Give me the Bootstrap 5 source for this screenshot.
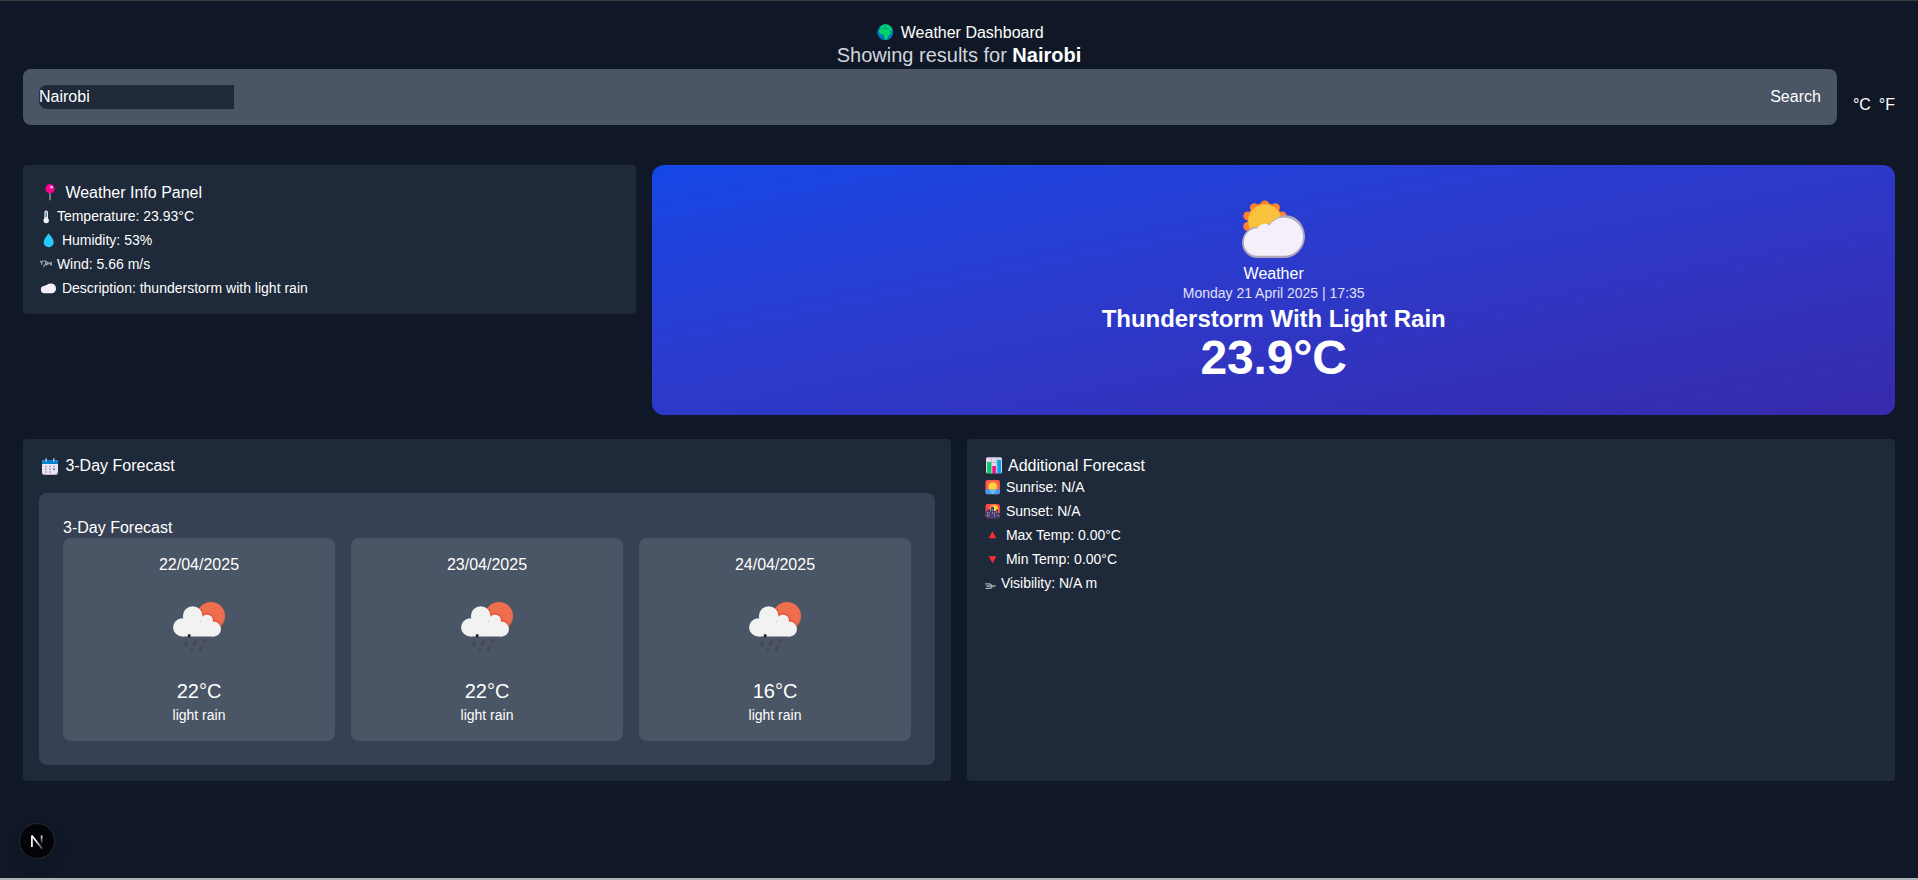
<!DOCTYPE html>
<html lang="en">
<head>
<meta charset="utf-8">
<meta name="viewport" content="width=device-width, initial-scale=1">
<title>Weather Dashboard</title>
<link href="https://cdn.jsdelivr.net/npm/bootstrap@5.3.0/dist/css/bootstrap.min.css" rel="stylesheet">
<style>
  body { font-family: "Liberation Sans", Arial, sans-serif; font-size: 16px; line-height: 24px; color: #fff; background: #101827; height: 880px; overflow: hidden; border-top: 1px solid #3c3c3c; border-bottom: 2px solid #a9b4b9; }
  h1, h2, h3, p { margin: 0; font-size: inherit; font-weight: 400; line-height: inherit; }
  svg { display: block; flex: none; overflow: visible; }
  .page { padding: 20px 23px 0; }
  .title { line-height: 23px; gap: 4.45px; }
  .results { font-size: 20px; line-height: 23px; color: #d1d5dc; padding-bottom: 2px; }
  .search { background: #4a5565; border-radius: 8px; padding: 16px; height: 56px; }
  .search input { width: 195px; height: 24px; padding: 0; border: 0; border-radius: 8px 0 0 8px; background: #1e2939; color: #fff; outline: 0; font: inherit; line-height: 24px; }
  .search button { padding: 0; border: 0; background: none; color: #fff; line-height: 24px; }
  .main-grid { display: grid; grid-template-columns: repeat(3, 1fr); gap: 16px; margin-top: 40px; }
  .wide { grid-column: span 2; }
  .half-grid { display: grid; grid-template-columns: 1fr 1fr; gap: 16px; margin-top: 24px; height: 342px; }
  .panel { background: #1e2939; border-radius: 4px; padding: 16px; }
  .info { height: 149px; }
  .head { gap: 4.4px; height: 21px; line-height: 21px; }
  .info .head { height: 23.5px; line-height: 24px; }
  .line { font-size: 14px; height: 24px; line-height: 22px; gap: 3.9px; }
  .hero { height: 250px; border-radius: 12px; padding-top: 35px; background: linear-gradient(to bottom right, #1447e6, #372aac); background: linear-gradient(to bottom right in oklab, #1447e6, #372aac); }
  .hero-name { margin-top: 4px; line-height: 24px; height: 21.5px; }
  .hero-date { font-size: 14px; line-height: 18px; height: 21.5px; color: #e0e2f6; }
  .hero-desc { font-size: 24px; line-height: 28px; height: 29px; font-weight: 700; letter-spacing: -.04px; }
  .hero-temp { font-size: 48px; line-height: 48px; font-weight: 700; letter-spacing: -.15px; }
  .inner { background: #364153; border-radius: 8px; padding: 24px; margin-top: 17px; height: 272px; }
  .inner h3 { line-height: 21px; }
  .days { display: grid; grid-template-columns: repeat(3, 1fr); gap: 16px; }
  .day { background: #4a5565; border-radius: 8px; height: 203px; padding-top: 16px; }
  .day-date { line-height: 22px; margin-bottom: 22px; }
  .day-temp { font-size: 20px; line-height: 28px; margin-top: 15px; }
  .day-desc { font-size: 14px; line-height: 20px; }
  .next { left: 19px; bottom: 21px; width: 36px; height: 36px; border-radius: 50%; background: #030408; border: 1px solid #2a2a2a; box-shadow: 0 8px 16px rgba(0,0,0,.08); }
</style>
</head>
<body>
<svg width="0" height="0" class="position-absolute">
  <symbol id="rain" viewBox="0 0 64 64">
    <circle cx="44" cy="18" r="14" fill="#ec6e4c"/>
    <clipPath id="sunclip"><circle cx="44" cy="18" r="14"/></clipPath>
    <g clip-path="url(#sunclip)" fill="#e9472f"><circle cx="25.7" cy="18" r="10.7"/><circle cx="40" cy="22.3" r="7"/><circle cx="46.7" cy="31" r="8.5"/></g>
    <g fill="#f2f2f2"><circle cx="25.7" cy="18" r="9.8"/><circle cx="15.2" cy="29.4" r="9.1"/><circle cx="40" cy="22.5" r="6"/><circle cx="46.6" cy="31" r="7.4"/><path d="M15 24h27l5 6v8.4H15z"/></g>
    <path d="M22 38l.3-.6" stroke="#222" stroke-width="2.8" stroke-linecap="round"/>
    <g stroke="#4b484b" stroke-width="3" stroke-linecap="round"><path d="M18.5 47.3l1-2.4M27.2 46l1-2.2M36.800 42.800l.3-.4M25 51.600l.2-.3M33.200 51.800l.8-1.800"/></g>
  </symbol>
</svg>
<div class="page">
  <header class="text-center">
    <h1 class="title d-flex justify-content-center">
      <svg width="22" height="23"><circle cx="11.300" cy="11.300" r="8" fill="#0074ba"/><path d="M5.800 6.200Q8 3.500 11.500 3.300q3.600.2 5.800 2.700l1.400 3.200-1.700 1-.9-.7.2 1.500 1.300.4-1.700 2.300-1.700 1.500-.4 2-1.600 1.900-1.300-.5-.8-3-.7-2.200-2.700-.1-1.900-1.700.3-2.700 1.500-1.200z" fill="#00d26a"/><path d="M8.600 7.200l2.300-.2 1.500.9 2.400-.3M10.800 5.300l1.600.3" stroke="#0074ba" stroke-width=".8" fill="none"/></svg>
      <span>Weather Dashboard</span>
    </h1>
    <p class="results">Showing results for <strong class="text-white">Nairobi</strong></p>
  </header>
  <div class="d-flex gap-3 align-items-center">
    <form class="search d-flex justify-content-between flex-grow-1">
      <input type="text" value="Nairobi">
      <button type="button">Search</button>
    </form>
    <div class="d-flex gap-2 pt-3"><span>°C</span><span>°F</span></div>
  </div>

  <div class="main-grid">
    <section class="panel info">
      <h2 class="head d-flex">
        <svg width="22" height="24"><path d="M11 11v8.200" stroke="#8b8792" stroke-width="1.600"/><circle cx="11" cy="7.800" r="4.700" fill="#f8048f"/><circle cx="12.500" cy="6.200" r="1.400" fill="#ffc4e6"/></svg>
        <span>Weather Info Panel</span>
      </h2>
      <p class="line d-flex"><svg width="14" height="24"><path d="M7.200 7.400v8.400" stroke="#e9e6ee" stroke-width="3.600" stroke-linecap="round"/><circle cx="7.200" cy="15.500" r="2.700" fill="#f4f1f7"/><path d="M7.200 7.200v5" stroke="#3a8fb0" stroke-width="1.400"/></svg><span>Temperature: 23.93°C</span></p>
      <p class="line d-flex"><svg width="19" height="24"><path d="M9.700 4.200c1.700 2.600 5 5.600 5 9a5 5 0 0 1-10 0c0-3.400 3.300-6.400 5-9z" fill="#26c9fc"/></svg><span>Humidity: 53%</span></p>
      <p class="line d-flex"><svg width="14" height="24" fill="none" stroke="#a2a7b0" stroke-width="1.200"><path d="M1.200 7.800l1.300 2 1.700-2.300M2.700 9.800v2M4.700 8h2v2.600l-2.200 3.200M7.600 8.600l1.600 3.200M7 12l2-1.800h3.500M9.600 9.400l2.600 2.600.2-3.200"/></svg><span>Wind: 5.66 m/s</span></p>
      <p class="line d-flex"><svg width="19" height="24"><path d="M5.600 16.300a3.600 3.600 0 0 1-.3-7.200q1-1.200 2.400-1.200Q9.300 6.500 12 6.500c3 0 5 2.200 5 4.900s-2 4.900-4.800 4.900z" fill="#f4eef9"/></svg><span>Description: thunderstorm with light rain</span></p>
    </section>

    <section class="hero wide d-flex flex-column align-items-center">
      <svg width="64" height="58" viewBox="0.7 0 64 58">
        <g fill="#ff822d"><circle cx="23.600" cy="20.500" r="17.500"/><circle cx="23.600" cy="5" r="4.500"/><circle cx="13" cy="7.600" r="4.400"/><circle cx="34.200" cy="7.600" r="4.400"/><circle cx="6.400" cy="15.800" r="4.400"/><circle cx="40.800" cy="15.800" r="4.400"/><circle cx="6.400" cy="26.400" r="4.500"/></g>
        <circle cx="23.600" cy="21" r="16.700" fill="#f9c23c"/>
        <path d="M5.200 31.500C9 27 15 26 19 29c4 2 8-8 22-13.500 13-2 22.700 8.500 22.700 20.800 0 12-9.500 21.700-21 21.700H16C7.500 58 .8 51 .8 43c0-4.500 1.500-8.500 4.400-11.500z" fill="#aea6bd"/>
        <path d="M16 28.200c2.800-4.700 8.500-5.800 12-2.800 3.400-4.700 8.500-7.900 14.500-7.900 10.700 0 19.300 8.400 19.300 18.900S53.500 55.800 42.500 55.800H16.200c-7.800 0-13.700-6.200-13.700-13.600 0-7.800 6-14 13.500-14z" fill="#f4eff9"/>
      </svg>
      <p class="hero-name">Weather</p>
      <p class="hero-date">Monday 21 April 2025 | 17:35</p>
      <p class="hero-desc">Thunderstorm With Light Rain</p>
      <p class="hero-temp">23.9°C</p>
    </section>
  </div>

  <div class="half-grid">
    <section class="panel">
      <h2 class="head d-flex">
        <svg width="22" height="21"><rect x="3" y="5" width="16" height="14.800" rx="2.200" fill="#ece6f3"/><path d="M3 9V7.500A2.500 2.500 0 0 1 5.500 5h11A2.500 2.500 0 0 1 19 7.500V9z" fill="#0084ce"/><path d="M7.200 3.200v3.500M14.800 3.200v3.500" stroke="#cac5d6" stroke-width="1.300"/><g fill="#a79db3"><path d="M6 10.800h1.700v1.500H6zM10.200 10.800h1.700v1.500h-1.700zM14.200 10.800h1.700v1.500h-1.700zM6 13.600h1.700v1.500H6zM10.200 13.600h1.700v1.500h-1.700zM6 16.300h1.700v1.400H6zM10.200 16.300h1.700v1.400h-1.700z"/></g><path d="M14.200 13.600H16v1.500h-1.800z" fill="#0084ce"/><path d="M15.500 19.800L19 16.500v1.100a2.200 2.200 0 0 1-2.200 2.200z" fill="#b9afc5"/></svg>
        <span>3-Day Forecast</span>
      </h2>
      <div class="inner">
        <h3>3-Day Forecast</h3>
        <div class="days text-center">
          <div class="day"><p class="day-date">22/04/2025</p><svg class="mx-auto" width="64" height="64"><use href="#rain"/></svg><p class="day-temp">22°C</p><p class="day-desc">light rain</p></div>
          <div class="day"><p class="day-date">23/04/2025</p><svg class="mx-auto" width="64" height="64"><use href="#rain"/></svg><p class="day-temp">22°C</p><p class="day-desc">light rain</p></div>
          <div class="day"><p class="day-date">24/04/2025</p><svg class="mx-auto" width="64" height="64"><use href="#rain"/></svg><p class="day-temp">16°C</p><p class="day-desc">light rain</p></div>
        </div>
      </div>
    </section>
    <section class="panel">
      <h2 class="head d-flex gap-1">
        <svg width="21" height="21"><rect x="3" y="2.300" width="16" height="16" rx="1.600" fill="#e2d9ec"/><path d="M3 7.500h16M3 13h16M8.500 2.500v16M13.800 2.500v16" stroke="#b4aac2" stroke-width=".7"/><path d="M4.200 7h4v11.300h-4z" fill="#00c965"/><path d="M9.300 11h3.600v7.300H9.300z" fill="#f70a8d"/><path d="M14.300 4.800h3.700v13.500h-3.700z" fill="#00a6ed"/></svg>
        <span>Additional Forecast</span>
      </h2>
      <p class="line d-flex"><svg width="19" height="24"><rect x="2.500" y="4" width="14.400" height="14.200" rx="2" fill="#ff5a50"/><circle cx="9.700" cy="10.600" r="5" fill="#ff9a35"/><circle cx="9.700" cy="10.800" r="3.800" fill="#fcd53f"/><path d="M2.500 13.600h14.400v2.600a2 2 0 0 1-2 2H4.500a2 2 0 0 1-2-2z" fill="#3f9cf5"/><path d="M6.500 14.800h6.600M8 16.600h3.600" stroke="#b8def5" stroke-width=".8"/></svg><span>Sunrise: N/A</span></p>
      <p class="line d-flex"><svg width="19" height="24"><rect x="2.500" y="4" width="14.400" height="14.200" rx="2" fill="#f8494c"/><circle cx="11" cy="9" r="4.600" fill="#ff9a35"/><circle cx="11.500" cy="8.500" r="3" fill="#fcd53f"/><path d="M2.500 11h2V9H7v2h1V7.500l1.500-1 1.500 1V11h2V9.500h2V13h2v3.200a2 2 0 0 1-2 2H4.500a2 2 0 0 1-2-2z" fill="#433b6b"/><path d="M4 13h1M4 15.500h1M9 10h1M9 13h1M13 12h1M14.500 15.500h1" stroke="#e7c884" stroke-width="1.200"/><path d="M6 12v5M11.500 12v5" stroke="#8065a6" stroke-width="1.200"/></svg><span>Sunset: N/A</span></p>
      <p class="line d-flex"><svg width="19" height="24"><path d="M9.500 7.200l3.800 7H5.700z" fill="#f92f32"/></svg><span>Max Temp: 0.00°C</span></p>
      <p class="line d-flex"><svg width="19" height="24"><path d="M9.500 15.300l3.800-7H5.700z" fill="#f92f32"/></svg><span>Min Temp: 0.00°C</span></p>
      <p class="line d-flex"><svg width="14" height="24" fill="none" stroke="#a9adb4" stroke-width="1.300"><path d="M2.200 11.800h4.500l2 1.400M3.500 14h9M2.500 16.300h4.800l2-1.200"/></svg><span>Visibility: N/A m</span></p>
    </section>
  </div>
</div>

<div class="next position-fixed d-flex align-items-center justify-content-center">
  <svg width="34" height="34" fill="none" stroke-width="1.700">
    <defs><linearGradient id="fade" gradientUnits="userSpaceOnUse" x1="0" y1="11" x2="0" y2="20"><stop stop-color="#fff"/><stop offset="1" stop-color="#fff" stop-opacity="0"/></linearGradient><linearGradient id="fade2" gradientUnits="userSpaceOnUse" x1="16" y1="16" x2="22.500" y2="24"><stop stop-color="#fff"/><stop offset="1" stop-color="#fff" stop-opacity=".3"/></linearGradient></defs>
    <path d="M11.900 23V11.500" stroke="#fff"/><path d="M11.900 11.700l10.300 13" stroke="url(#fade2)"/><path d="M21.600 11.500v8.500" stroke="url(#fade)"/>
  </svg>
</div>
<script src="https://cdn.jsdelivr.net/npm/bootstrap@5.3.0/dist/js/bootstrap.bundle.min.js"></script>
</body>
</html>
